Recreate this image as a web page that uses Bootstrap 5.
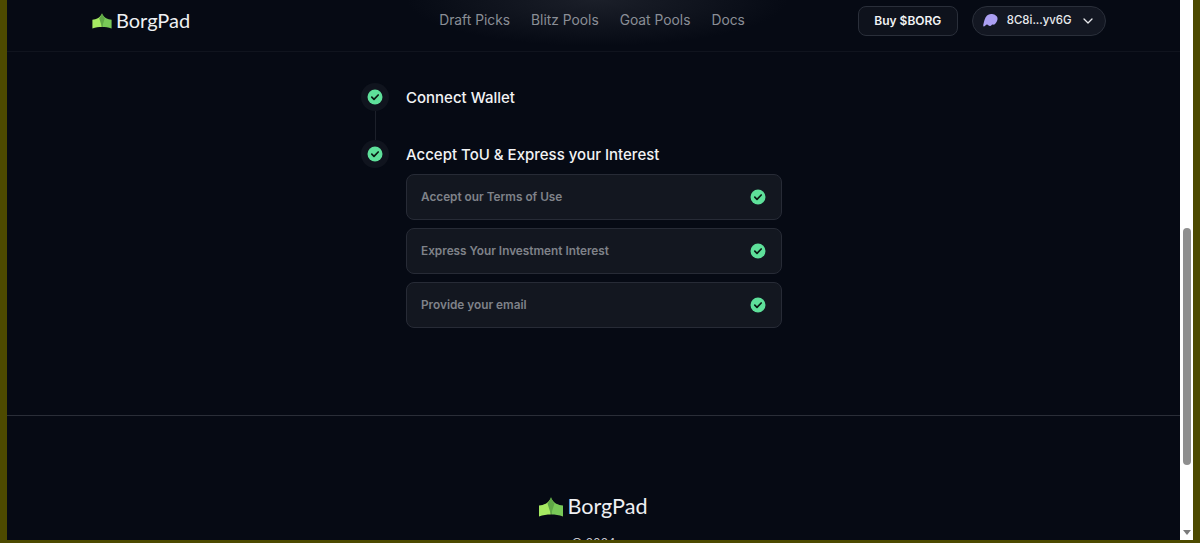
<!DOCTYPE html>
<html lang="en">

<head>
    <meta charset="UTF-8">
    <meta name="viewport" content="width=device-width, initial-scale=1.0">
    <title>BorgPad</title>
    <link href="https://cdn.jsdelivr.net/npm/bootstrap@5.3.3/dist/css/bootstrap.min.css" rel="stylesheet">
    <style>
        html, body {
            height: 100%;
            overflow: hidden;
        }

        body {
            background-color: #4d4a00;
            font-family: "Inter", "Liberation Sans", sans-serif;
            color: #fff;
        }

        .app-frame {
            height: 540px;
            margin: 0 7px;
            background-color: #fff;
        }

        .page-area {
            width: 1173px;
            height: 540px;
            overflow: hidden;
            background-color: #060a14;
        }

        .top-bar {
            height: 52px;
            padding-left: 85px;
            padding-bottom: 10px;
            border-bottom: 1px solid #10141e;
            background: radial-gradient(ellipse 190px 46px at 590px 0, #1b1f29 0, rgba(27, 31, 41, 0) 100%);
        }

        .brand-name {
            font-family: "Lato", "Liberation Sans", sans-serif;
            font-size: 20px;
            line-height: 1;
            color: #eef0f3;
        }

        .brand-small { width: 20px; height: 16px; }
        .brand-large { width: 24px; height: 20px; }
        .brand-name-top { margin-top: -2px; }
        .brand-name-large { font-size: 21.6px; }

        .nav-links {
            margin-left: 249px;
            gap: 21px;
            font-size: 13.8px;
            color: #8a8e96;
        }

        .nav-links a {
            color: inherit;
            text-decoration: none;
        }

        .buy-btn {
            margin-left: 113px;
            width: 100px;
            height: 30px;
            padding: 0;
            border: 1px solid #2a2f3a;
            border-radius: 8px;
            background-color: #0e121c;
            color: #f2f3f5;
            font-size: 12px;
            font-weight: 600;
        }

        .wallet-btn {
            margin-left: 14px;
            width: 134px;
            height: 30px;
            padding: 0 12px 0 10px;
            border: 1px solid #2a2f3a;
            border-radius: 15px;
            background-color: #131722;
            color: #e8e9ec;
            font-size: 11.4px;
            font-weight: 500;
        }

        .wallet-addr { margin-left: 9px; }

        .steps-wrap {
            width: 420px;
            margin-left: 354px;
            padding-top: 31px;
            height: 363px;
        }

        .step-dot {
            width: 28px;
            height: 28px;
            border-radius: 50%;
            background-color: #10141e;
        }

        .step-line {
            width: 1px;
            height: 29px;
            background-color: #1c202a;
        }

        .step-rail { width: 28px; }

        .step-title {
            height: 28px;
            margin-left: 17px;
            font-size: 15px;
            font-weight: 500;
            line-height: 29px;
            color: #f2f3f5;
        }

        .task-list {
            margin-left: 45px;
            margin-top: 6px;
            gap: 8px;
        }

        .task-row {
            width: 376px;
            height: 46px;
            padding: 0 15px 0 14px;
            border: 1px solid #272b36;
            border-radius: 8px;
            background-color: #131720;
            color: #7f8289;
            font-size: 11.8px;
            font-weight: 600;
        }

        .task-label { margin-top: 2px; }

        .foot-area {
            border-top: 1px solid #2a2e38;
            padding-top: 80px;
        }

        .foot-copy {
            margin-top: 17px;
            font-size: 12px;
            line-height: 16px;
            color: #c6c8cd;
        }

        .scroll-col {
            width: 13px;
            height: 540px;
            padding-top: 228px;
        }

        .scroll-thumb {
            width: 8px;
            height: 237px;
            border-radius: 4px;
            background-color: #8f8f8f;
        }

        .scroll-arrow {
            width: 0;
            height: 0;
            margin-top: 65px;
            border-left: 4px solid transparent;
            border-right: 4px solid transparent;
            border-top: 5px solid #7b7b7b;
        }
    </style>
</head>

<body>
    <div class="app-frame d-flex">
        <div class="page-area">
            <div class="top-bar d-flex align-items-center">
                <a class="d-flex align-items-center gap-1 text-decoration-none" href="#">
                    <svg class="brand-small" viewBox="0 0 24 20">
                        <path d="M0 8.5C5 8 9 6.5 11.8 1V17.5C8 17.5 4 18 0 19.5Z" fill="#a6ea62"/>
                        <path d="M24 8.5C19 8 15 6.5 12.2 1V17.5C16 17.5 20 18 24 19.5Z" fill="#78c957"/>
                        <path d="M12 0C11 3 10 5 8.5 6.5L12 17.5 15.5 6.5C14 5 13 3 12 0Z" fill="#5fa846"/>
                    </svg>
                    <span class="brand-name brand-name-top">BorgPad</span>
                </a>
                <div class="nav-links d-flex">
                    <a href="#">Draft Picks</a>
                    <a href="#">Blitz Pools</a>
                    <a href="#">Goat Pools</a>
                    <a href="#">Docs</a>
                </div>
                <button class="buy-btn btn" type="button">Buy $BORG</button>
                <button class="wallet-btn btn d-flex align-items-center" type="button">
                    <svg width="15" height="13" viewBox="0 0 15 13">
                        <path d="M0.5 12.5C2 12.5 3 10.5 4 10.5S5.5 12 7 12 8.5 10.5 9.5 10.5 11 11 12 10 15 6.5 14.5 4 11 0 8 0 2.5 2 1.5 6 0 11 0.5 12.5Z" fill="#ab9ff2"/>
                    </svg>
                    <span class="wallet-addr">8C8i...yv6G</span>
                    <svg class="ms-auto" width="10" height="6" viewBox="0 0 10 6">
                        <path d="M1 1 5 5 9 1" fill="none" stroke="#e8e9ec" stroke-width="1.3" stroke-linecap="round" stroke-linejoin="round"/>
                    </svg>
                </button>
            </div>

            <div class="steps-wrap">
                <div class="d-flex">
                    <div class="step-rail d-flex flex-column align-items-center">
                        <div class="step-dot d-flex align-items-center justify-content-center">
                            <svg width="16" height="16" viewBox="0 0 16 16">
                                <circle cx="8" cy="8" r="7.5" fill="#5ee09a"/>
                                <path d="M4.8 8.2 7 10.3 11.2 6" fill="none" stroke="#0a1a14" stroke-width="1.7" stroke-linecap="round" stroke-linejoin="round"/>
                            </svg>
                        </div>
                        <div class="step-line"></div>
                    </div>
                    <div class="step-title">Connect Wallet</div>
                </div>
                <div class="d-flex">
                    <div class="step-rail d-flex flex-column align-items-center">
                        <div class="step-dot d-flex align-items-center justify-content-center">
                            <svg width="16" height="16" viewBox="0 0 16 16">
                                <circle cx="8" cy="8" r="7.5" fill="#5ee09a"/>
                                <path d="M4.8 8.2 7 10.3 11.2 6" fill="none" stroke="#0a1a14" stroke-width="1.7" stroke-linecap="round" stroke-linejoin="round"/>
                            </svg>
                        </div>
                    </div>
                    <div class="step-title">Accept ToU &amp; Express your Interest</div>
                </div>
                <div class="task-list d-flex flex-column">
                    <div class="task-row d-flex align-items-center justify-content-between">
                        <span class="task-label">Accept our Terms of Use</span>
                        <svg width="16" height="16" viewBox="0 0 16 16">
                            <circle cx="8" cy="8" r="7.5" fill="#5ee09a"/>
                            <path d="M4.8 8.2 7 10.3 11.2 6" fill="none" stroke="#0a1a14" stroke-width="1.7" stroke-linecap="round" stroke-linejoin="round"/>
                        </svg>
                    </div>
                    <div class="task-row d-flex align-items-center justify-content-between">
                        <span class="task-label">Express Your Investment Interest</span>
                        <svg width="16" height="16" viewBox="0 0 16 16">
                            <circle cx="8" cy="8" r="7.5" fill="#5ee09a"/>
                            <path d="M4.8 8.2 7 10.3 11.2 6" fill="none" stroke="#0a1a14" stroke-width="1.7" stroke-linecap="round" stroke-linejoin="round"/>
                        </svg>
                    </div>
                    <div class="task-row d-flex align-items-center justify-content-between">
                        <span class="task-label">Provide your email</span>
                        <svg width="16" height="16" viewBox="0 0 16 16">
                            <circle cx="8" cy="8" r="7.5" fill="#5ee09a"/>
                            <path d="M4.8 8.2 7 10.3 11.2 6" fill="none" stroke="#0a1a14" stroke-width="1.7" stroke-linecap="round" stroke-linejoin="round"/>
                        </svg>
                    </div>
                </div>
            </div>

            <div class="foot-area d-flex flex-column align-items-center">
                <a class="d-flex align-items-center gap-1 text-decoration-none" href="#">
                    <svg class="brand-large" viewBox="0 0 24 20">
                        <path d="M0 8.5C5 8 9 6.5 11.8 1V17.5C8 17.5 4 18 0 19.5Z" fill="#a6ea62"/>
                        <path d="M24 8.5C19 8 15 6.5 12.2 1V17.5C16 17.5 20 18 24 19.5Z" fill="#78c957"/>
                        <path d="M12 0C11 3 10 5 8.5 6.5L12 17.5 15.5 6.5C14 5 13 3 12 0Z" fill="#5fa846"/>
                    </svg>
                    <span class="brand-name brand-name-large">BorgPad</span>
                </a>
                <div class="foot-copy">© 2024</div>
            </div>
        </div>
        <div class="scroll-col d-flex flex-column align-items-center">
            <div class="scroll-thumb"></div>
            <div class="scroll-arrow"></div>
        </div>
    </div>

    <script src="https://cdn.jsdelivr.net/npm/bootstrap@5.3.3/dist/js/bootstrap.bundle.min.js"></script>
</body>

</html>
